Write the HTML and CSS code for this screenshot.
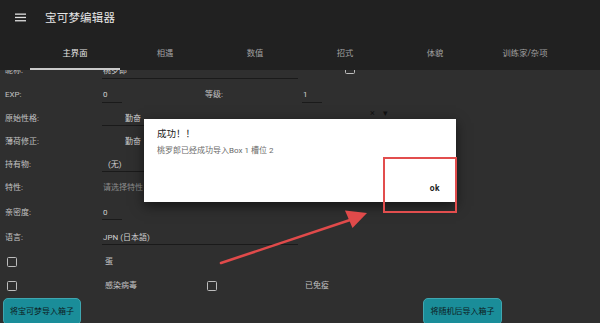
FILE: index.html
```html
<!DOCTYPE html>
<html lang="zh">
<head>
<meta charset="utf-8">
<link rel="stylesheet" href="styles.css">
</head>
<body>
<div class="screen">
  <header class="appbar">
    <div class="toolbar">
      <svg class="menu" width="11" height="9" viewBox="0 0 11 9"><rect x="0" y="0.5" width="11" height="1.3" fill="#e0e0e0"/><rect x="0" y="3.8" width="11" height="1.3" fill="#e0e0e0"/><rect x="0" y="7.1" width="11" height="1.3" fill="#e0e0e0"/></svg>
      <span class="title">宝可梦编辑器</span>
    </div>
    <nav class="tabs">
      <div class="tab active">主界面</div>
      <div class="tab">相遇</div>
      <div class="tab">数值</div>
      <div class="tab">招式</div>
      <div class="tab">体貌</div>
      <div class="tab">训练家/杂项</div>
    </nav>
  </header>
  <main class="content">
    <div class="form">
      <div class="row h24">
        <span class="label">昵称:</span>
        <span class="field wide">桃罗郎</span>
        <span class="box far"></span>
      </div>
      <div class="row h24">
        <span class="label">EXP:</span>
        <span class="field short">0</span>
        <span class="label">等级:</span>
        <span class="field short">1</span>
      </div>
      <div class="row h23">
        <span class="label">原始性格:</span>
        <span class="field spin wide">勤奋</span>
        <span class="spinicons"><i>×</i><i>▾</i></span>
      </div>
      <div class="row h23">
        <span class="label">薄荷修正:</span>
        <span class="field spin nob">勤奋</span>
      </div>
      <div class="row h23">
        <span class="label">持有物:</span>
        <span class="field item wide">(无)</span>
      </div>
      <div class="row h24">
        <span class="label">特性:</span>
        <span class="field hint nob">请选择特性</span>
      </div>
      <div class="row h25">
        <span class="label">亲密度:</span>
        <span class="field short">0</span>
      </div>
      <div class="row h25">
        <span class="label">语言:</span>
        <span class="field wide">JPN (日本語)</span>
      </div>
      <div class="row h24">
        <span class="box"></span>
        <span class="label">蛋</span>
      </div>
      <div class="row h24">
        <span class="box"></span>
        <span class="label">感染病毒</span>
        <span class="box"></span>
        <span class="label">已免疫</span>
      </div>
    </div>
    <div class="actions">
      <button class="btn">将宝可梦导入箱子</button>
      <button class="btn second">将随机后导入箱子</button>
    </div>
  </main>

  <div class="dialog">
    <div class="dlg-title">成功！！</div>
    <div class="dlg-msg">桃罗郎已经成功导入Box 1 槽位 2</div>
    <div class="dlg-actions"><span class="ok">ok</span></div>
  </div>
  <div class="highlight"></div>
  <svg class="arrow" width="600" height="323" viewBox="0 0 600 323">
    <line x1="221" y1="263" x2="353" y2="219" stroke="#e04a4a" stroke-width="2.6" stroke-linecap="round"/>
    <polygon points="367,213 345,210.5 352.5,228" fill="#e04a4a"/>
  </svg>
</div>
</body>
</html>
```

FILE: styles.css
```css
* { box-sizing: border-box; }
html, body { margin: 0; padding: 0; }
body {
  width: 600px;
  height: 323px;
  overflow: hidden;
  background: #2f2f2f;
  font-family: Roboto, "Noto Sans CJK SC", sans-serif;
}
.screen {
  position: relative;
  width: 600px;
  height: 323px;
  display: flex;
  flex-direction: column;
  overflow: hidden;
}
.appbar {
  background: #212121;
  height: 70px;
  flex: none;
  position: relative;
  z-index: 2;
}
.toolbar {
  height: 35px;
  display: flex;
  align-items: center;
  padding-left: 15px;
  padding-bottom: 1px;
}
.menu { display: block; }
.title {
  margin-left: 19px;
  color: #e6e6e6;
  font-size: 11.5px;
  letter-spacing: 0.2px;
}
.tabs {
  display: flex;
  padding-left: 30px;
  height: 35px;
}
.tab {
  width: 90px;
  display: flex;
  align-items: center;
  justify-content: center;
  font-size: 8.3px;
  color: #a0a0a0;
  border-bottom: 2px solid transparent;
  padding-top: 1px;
}
.tab.active {
  color: #e4e4e4;
  border-bottom-color: #c9c9c9;
}
.content {
  flex: 1;
  overflow: hidden;
  display: flex;
  flex-direction: column;
}
.form {
  margin-top: -11px;
  padding-left: 2px;
}
.row {
  display: grid;
  grid-template-columns: 100px 100px 100px 100px 1fr;
  align-items: center;
  font-size: 8px;
  color: #c2c2c2;
}
.h23 { height: 23px; }
.h24 { height: 24px; }
.h25 { height: 25px; }
.label {
  padding-left: 3px;
  line-height: 10px;
  white-space: nowrap;
}
.field {
  line-height: 10px;
  padding-top: 3px;
  padding-bottom: 1.5px;
  border-bottom: 1px solid #1a1a1a;
  color: #cfcfcf;
  white-space: nowrap;
  padding-left: 1px;
}
.field.short { width: 20px; }
.field.wide { grid-column: span 2; width: 196px; }
.field.spin { padding-left: 23px; }
.field.item { padding-left: 6px; }
.field.hint { color: #8c8c8c; }
.field.nob { border-bottom-color: transparent; }
.box {
  width: 10px;
  height: 10px;
  margin-left: 5px;
  border: 1.5px solid #bdbdbd;
  border-radius: 1.5px;
}
.box.far { margin-left: 43px; align-self: start; margin-top: 5px; }
.spinicons {
  display: flex;
  gap: 8px;
  margin-left: 68px;
  align-self: start;
  margin-top: 1px;
  color: #111;
  font-size: 9px;
  line-height: 10px;
}
.spinicons i { font-style: normal; }
.actions {
  display: flex;
  padding-left: 3px;
  margin-top: 0;
}
.btn {
  width: 78px;
  height: 27px;
  background: #1a8d99;
  border: 1px solid #3fa6b0;
  border-radius: 5px;
  color: #0e1b1d;
  font-family: Roboto, "Noto Sans CJK SC", sans-serif;
  font-size: 8px;
  padding: 0 0 2px 0;
}
.btn.second {
  margin-left: 342px;
  width: 79px;
}
.dialog {
  position: absolute;
  left: 144px;
  top: 119px;
  width: 312px;
  height: 83px;
  background: #fff;
  box-shadow: 0 4px 12px rgba(0, 0, 0, 0.55);
  padding: 8px 13px 0;
  display: flex;
  flex-direction: column;
  z-index: 3;
}
.dlg-title {
  font-size: 9.5px;
  color: #222;
  line-height: 13px;
}
.dlg-msg {
  margin-top: 6px;
  font-size: 8px;
  color: #6a6a6a;
  line-height: 10px;
}
.dlg-actions {
  margin-top: auto;
  display: flex;
  justify-content: flex-end;
  padding: 0 3px 9px 0;
}
.ok {
  font-size: 8.5px;
  font-weight: bold;
  color: #1e1e1e;
  letter-spacing: 0.5px;
}
.highlight {
  position: absolute;
  left: 383px;
  top: 157px;
  width: 74px;
  height: 56px;
  border: 2px solid #e24e4e;
  z-index: 4;
}
.arrow {
  position: absolute;
  left: 0;
  top: 0;
  z-index: 4;
  pointer-events: none;
}
```
